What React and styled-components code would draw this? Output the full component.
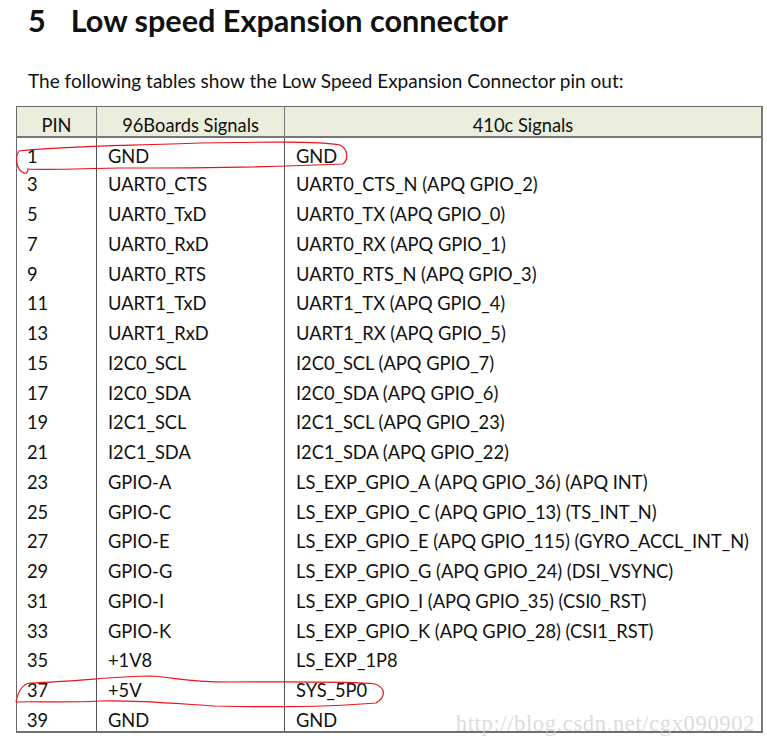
import React from 'react';
import styled, { createGlobalStyle } from 'styled-components';

const GlobalStyle = createGlobalStyle`
  body {
    margin: 0;
    background: #ffffff;
    font-family: Lato, "Open Sans", sans-serif;
    color: #111;
  }
`;

const Page = styled.div`
  position: relative;
  width: 767px;
  height: 745px;
  overflow: hidden;
`;

const Heading = styled.h1`
  margin: 0;
  padding: 3px 0 0 28px;
  font-size: 30.6px;
  font-weight: 700;
  line-height: 36px;
  display: flex;
  gap: 25px;
`;

const Intro = styled.p`
  margin: 31px 0 0 28px;
  font-size: 19px;
  line-height: 22px;
`;

const Table = styled.table`
  margin: 14px 0 0 16px;
  width: 747px;
  border-collapse: collapse;
  table-layout: fixed;
  font-size: 18.3px;
  border-top: 1px solid #6a6a6a;
  border-bottom: 2px solid #6f6f6f;
  border-left: 1px solid #6a6a6a;
  border-right: 2px solid #7a7a7a;
`;

const HeadCell = styled.th`
  width: ${p => p.$w}px;
  height: 30px;
  box-sizing: border-box;
  padding: 8px 0 0;
  vertical-align: top;
  line-height: 20px;
  background: #ebeedc;
  font-weight: 400;
  text-align: center;
  border-bottom: 2px solid #777;
  border-left: 1px solid #777;
  &:first-child { border-left: none; }
`;

const Cell = styled.td`
  height: 29.75px;
  box-sizing: border-box;
  padding: 8px 0 0 ${p => p.$pad}px;
  vertical-align: top;
  border-left: 1px solid #555;
  line-height: 20px;
  white-space: nowrap;
  &:first-child { border-left: none; }
`;

const Ink = styled.svg`
  position: absolute;
  left: 0;
  top: 0;
  pointer-events: none;
`;

const Watermark = styled.div`
  position: absolute;
  right: 12px;
  top: 711px;
  font-family: "Liberation Serif", serif;
  font-size: 22.6px;
  letter-spacing: 0.6px;
  color: rgba(205, 205, 205, 0.7);
`;

const rows = [
  ['1', 'GND', 'GND'],
  ['3', 'UART0_CTS', 'UART0_CTS_N (APQ GPIO_2)'],
  ['5', 'UART0_TxD', 'UART0_TX (APQ GPIO_0)'],
  ['7', 'UART0_RxD', 'UART0_RX (APQ GPIO_1)'],
  ['9', 'UART0_RTS', 'UART0_RTS_N (APQ GPIO_3)'],
  ['11', 'UART1_TxD', 'UART1_TX (APQ GPIO_4)'],
  ['13', 'UART1_RxD', 'UART1_RX (APQ GPIO_5)'],
  ['15', 'I2C0_SCL', 'I2C0_SCL (APQ GPIO_7)'],
  ['17', 'I2C0_SDA', 'I2C0_SDA (APQ GPIO_6)'],
  ['19', 'I2C1_SCL', 'I2C1_SCL (APQ GPIO_23)'],
  ['21', 'I2C1_SDA', 'I2C1_SDA (APQ GPIO_22)'],
  ['23', 'GPIO-A', 'LS_EXP_GPIO_A (APQ GPIO_36) (APQ INT)'],
  ['25', 'GPIO-C', 'LS_EXP_GPIO_C (APQ GPIO_13) (TS_INT_N)'],
  ['27', 'GPIO-E', 'LS_EXP_GPIO_E (APQ GPIO_115) (GYRO_ACCL_INT_N)'],
  ['29', 'GPIO-G', 'LS_EXP_GPIO_G (APQ GPIO_24) (DSI_VSYNC)'],
  ['31', 'GPIO-I', 'LS_EXP_GPIO_I (APQ GPIO_35) (CSI0_RST)'],
  ['33', 'GPIO-K', 'LS_EXP_GPIO_K (APQ GPIO_28) (CSI1_RST)'],
  ['35', '+1V8', 'LS_EXP_1P8'],
  ['37', '+5V', 'SYS_5P0'],
  ['39', 'GND', 'GND'],
];

const App = () => (
  <Page>
    <GlobalStyle />
    <Heading>
      <span>5</span>
      <span>Low speed Expansion connector</span>
    </Heading>
    <Intro>The following tables show the Low Speed Expansion Connector pin out:</Intro>
    <Table>
      <thead>
        <tr>
          <HeadCell $w={80}>PIN</HeadCell>
          <HeadCell $w={188}>96Boards Signals</HeadCell>
          <HeadCell>410c Signals</HeadCell>
        </tr>
      </thead>
      <tbody>
        {rows.map(([pin, board, soc]) => (
          <tr key={pin}>
            <Cell $pad={10}>{pin}</Cell>
            <Cell $pad={11}>{board}</Cell>
            <Cell $pad={11}>{soc}</Cell>
          </tr>
        ))}
      </tbody>
    </Table>
    <Watermark>http://blog.csdn.net/cgx090902</Watermark>
    <Ink width="767" height="745" viewBox="0 0 767 745" fill="none" stroke="#e8141b" strokeWidth="1.2">
      <path d="M22 172 C 16 168, 15 156, 19 151 C 60 146, 120 146, 200 143 C 260 142, 320 141, 340 145 C 349 150, 348 160, 343 164 C 300 166, 200 168, 120 168 C 80 169, 40 170, 28 169 C 28 172, 26 175, 22 172" />
      <path d="M16 702 C 18 692, 22 684, 30 683 C 80 681, 120 676, 150 676 C 175 677, 180 682, 230 682 C 290 682, 350 681, 375 684 C 386 688, 386 697, 376 703 C 330 707, 260 707, 215 706 C 180 704, 140 700, 100 701 C 60 703, 30 701, 16 702" />
    </Ink>
  </Page>
);

export default App;
